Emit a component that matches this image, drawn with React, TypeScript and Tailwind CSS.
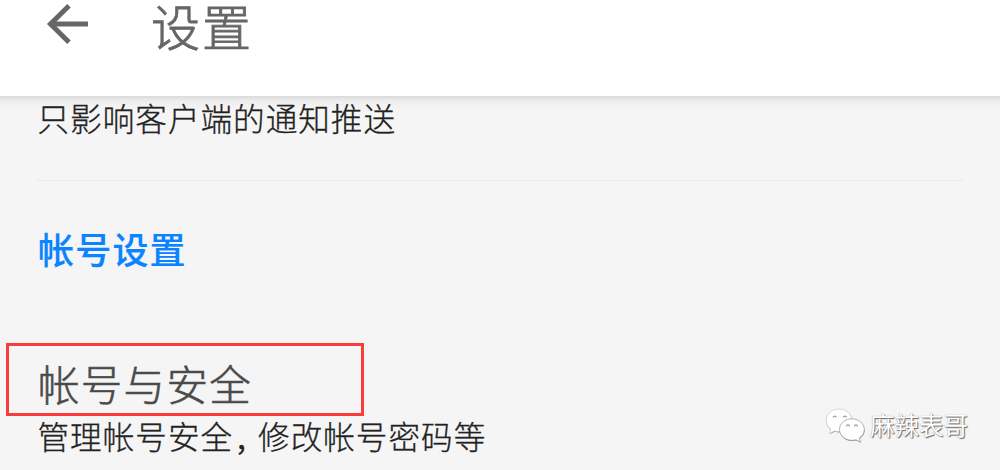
const bodyText =
  "text-[31.6px] tracking-[1px] text-[#222] [-webkit-text-stroke:0.3px_#222]";

function BackArrow() {
  return (
    <svg
      className="ml-[46px] mt-[3px] h-[43px] w-[43px]"
      viewBox="0 0 43 43"
      fill="none"
      stroke="#666666"
      strokeWidth="5"
    >
      <path d="M42 21H5" />
      <path d="M23 2.8L4.5 21L23 39.2" />
    </svg>
  );
}

function WeChatIcon() {
  return (
    <svg className="h-[36px] w-[41px]" viewBox="0 0 41 36">
      {/* Soft grey edge under the two white bubbles */}
      <g fill="#8c8c8c" transform="translate(0.3 0.8)">
        <path d="M14 1C6.500 1 1.300 6 1.300 12.300c0 3.700 1.700 6.700 4.500 8.800L4.700 25.300l4.800-2.300c1.500.4 3 .6 4.500.6 7.500 0 12.800-5 12.800-11.300S21.500 1 14 1Z" />
        <path d="M27 10.800c-7 0-12.500 4.700-12.500 10.700S20 32.300 27 32.300c1.400 0 2.700-.2 4-.500l4.500 2.200-1.200-4c3.100-2 5-4.900 5-8.300 0-6-5.300-10.900-12.300-10.900Z" />
      </g>
      <path
        d="M14 1C6.500 1 1.300 6 1.300 12.300c0 3.700 1.700 6.700 4.500 8.800L4.700 25.300l4.800-2.300c1.500.4 3 .6 4.500.6 7.500 0 12.800-5 12.800-11.300S21.500 1 14 1Z"
        fill="#fff"
        stroke="#c8c8c8"
        strokeWidth="0.7"
      />
      <path
        d="M27 10.800c-7 0-12.500 4.700-12.500 10.700S20 32.300 27 32.300c1.400 0 2.700-.2 4-.500l4.500 2.200-1.200-4c3.100-2 5-4.900 5-8.300 0-6-5.300-10.900-12.300-10.900Z"
        fill="#fff"
        stroke="#a0a0a0"
        strokeWidth="0.8"
      />
      <g fill="none" stroke="#999" strokeWidth="1.1">
        <path d="M8 9.400a1.700 1.700 0 0 1 3.300 0" />
        <path d="M18.300 9.400a1.700 1.700 0 0 1 3.300 0" />
        <path d="M21.500 18.400a1.500 1.500 0 0 1 3 0" />
        <path d="M29.500 18.400a1.500 1.500 0 0 1 3 0" />
      </g>
    </svg>
  );
}

export default function App() {
  return (
    <div
      lang="zh-CN"
      className="relative flex h-[470px] w-[1000px] flex-col overflow-hidden whitespace-nowrap bg-[#f5f5f5] font-['Noto_Sans_CJK_SC',sans-serif] font-light"
    >
      <header className="flex h-24 shrink-0 items-start bg-white">
        <BackArrow />
        <h1 className="ml-[62px] text-[49px] leading-[49px] tracking-[2px] text-[#666] [-webkit-text-stroke:0.8px_#666]">
          设置
        </h1>
      </header>

      <main className="flex flex-1 flex-col bg-linear-to-b from-[#d9d9d9] from-0% via-[#eeeeee] via-[5px] to-[#f5f5f5] to-[14px]">
        <p className={`ml-[37.5px] mt-[3px] leading-9 ${bodyText}`}>
          只影响客户端的通知推送
        </p>
        <div className="mx-9 mt-[45px] h-px bg-[#ebebeb]" />

        <h2 className="ml-[38px] mt-[47px] text-[36px] font-medium leading-10 tracking-[1.2px] text-[#0a84ff] [-webkit-text-stroke:0.2px_#0a84ff]">
          帐号设置
        </h2>

        <section className="mt-[75px]">
          <div className="ml-[6px] flex h-[73px] w-[358px] items-center border-3 border-[#fb3c3c] pl-[29px] pt-[6px]">
            <h3 className="text-[41.5px] leading-[50px] tracking-[1.3px] text-[#4a4a4a] [-webkit-text-stroke:0.6px_#4a4a4a]">
              帐号与安全
            </h3>
          </div>
          <p className={`-mt-px ml-[37.5px] flex leading-10 ${bodyText}`}>
            <span>管理帐号安全</span>
            <span className="w-[25px] pl-1 font-normal">,</span>
            <span>修改帐号密码等</span>
          </p>
        </section>
      </main>

      {/* Account watermark */}
      <div className="absolute left-[825px] top-[408px] flex items-start">
        <WeChatIcon />
        <span className="ml-1 mt-px text-[24.5px] font-normal leading-8 text-white [text-shadow:1px_1px_1px_#666,0_0_1px_#888]">
          麻辣表哥
        </span>
      </div>
    </div>
  );
}
